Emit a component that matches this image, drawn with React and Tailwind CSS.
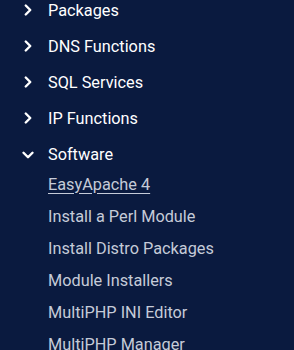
import { ChevronRight, ChevronDown } from "lucide-react";

const groups = ["Packages", "DNS Functions", "SQL Services", "IP Functions"];
const software = [
  "EasyApache 4",
  "Install a Perl Module",
  "Install Distro Packages",
  "Module Installers",
  "MultiPHP INI Editor",
  "MultiPHP Manager",
];

const App = () => {
  return (
    <div
      className="w-[294px] h-[350px] overflow-hidden bg-[#0a1a3f]"
      style={{ fontFamily: "Roboto, 'Liberation Sans', sans-serif" }}>
      <ul className="-mt-[7px]">
        {groups.map((g) => (
          <li key={g} className="flex items-center h-[36px] text-[16.3px] text-white">
            <ChevronRight size={18} strokeWidth={3.2} className="ml-[18.5px] mr-[11.5px] -mt-[2px]" />
            {g}
          </li>
        ))}
        <li>
          <div className="flex items-center h-[36px] text-[16.3px] text-white">
            <ChevronDown size={18} strokeWidth={3.2} className="ml-[18.5px] mr-[11.5px]" />
            Software
          </div>
          <ul className="-mt-[4px]">
            {software.map((s, i) => (
              <li key={s} className="flex items-center h-[32px] pl-[48px] text-[16.3px] text-[#c5cbd8]">
                <span className={i === 0 ? "underline underline-offset-[3px]" : ""}>{s}</span>
              </li>
            ))}
          </ul>
        </li>
      </ul>
    </div>
  );
};

export default App;
